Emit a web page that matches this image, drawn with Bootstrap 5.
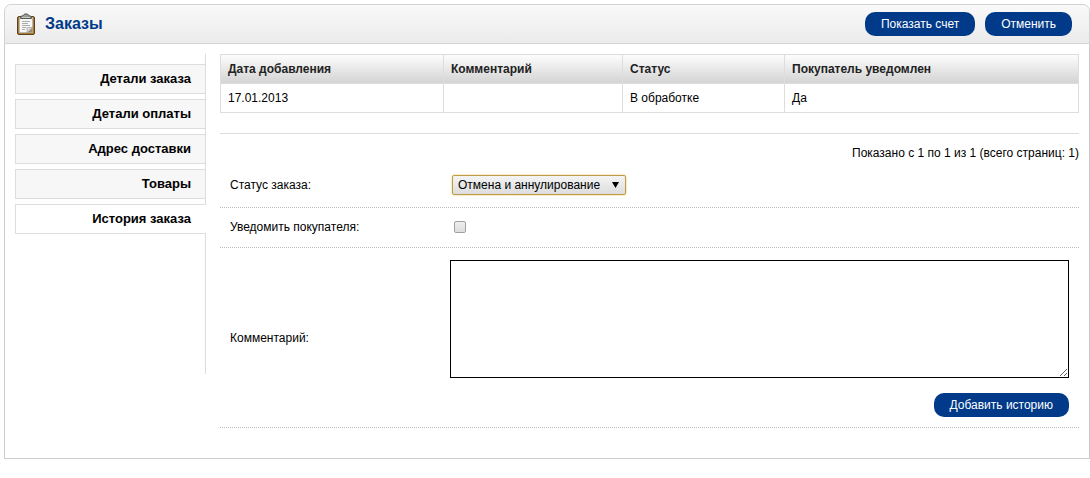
<!DOCTYPE html>
<html lang="ru">
<head>
<meta charset="utf-8">
<meta name="viewport" content="width=device-width, initial-scale=1">
<title>Заказы</title>
<link href="https://cdn.jsdelivr.net/npm/bootstrap@5.3.0/dist/css/bootstrap.min.css" rel="stylesheet">
<style>
body { font-family: "Liberation Sans", Arial, sans-serif; font-size: 12px; line-height: 16px; color: #000; background: #fff; }
.order-box { margin: 4px 0 0 4px; }
.order-head { height: 40px; padding: 0 17px 0 11px; border: 1px solid #d3d3d3; border-radius: 7px 7px 0 0; background: linear-gradient(#f9f9f9, #ebebeb); }
.order-head h1 { margin: 0 0 0 9px; font-size: 16px; line-height: 20px; font-weight: bold; color: #003a88; }
.head-actions { gap: 10px; }
.order-body { padding: 10px 10px 30px; border: 1px solid #ccc; border-top: 0; }
.btn-order { --bs-btn-font-size: 12px; --bs-btn-line-height: 14px; --bs-btn-padding-x: 16px; --bs-btn-padding-y: 5px; --bs-btn-border-width: 0; --bs-btn-border-radius: 10px; --bs-btn-color: #fff; --bs-btn-bg: #003a88; --bs-btn-hover-color: #fff; --bs-btn-hover-bg: #002f70; --bs-btn-active-bg: #002f70; --bs-btn-active-color: #fff; }
.side-tabs { width: 191px; height: 320px; padding-top: 10px; gap: 5px; border-right: 1px solid #ddd; }
.side-tabs .nav-link { height: 30px; padding: 6px 14px 6px 8px; font-size: 13px; line-height: 16px; font-weight: bold; text-align: right; color: #000; background: #f7f7f7; border: 1px solid #ddd; border-right: 0; border-radius: 0; }
.side-tabs .nav-link.active { margin-right: -1px; padding-right: 15px; background: #fff; }
.order-main { margin-left: 14px; min-width: 0; }
.history { table-layout: fixed; border-collapse: collapse; border: 1px solid #ddd; }
.history th, .history td { height: 29px; padding: 6px 7px; border: 1px solid #ddd; }
.history thead tr { background: linear-gradient(#fdfdfd, #d2d2d2); }
.history th { color: #222; }
.history .c-date { width: 223px; } .history .c-note { width: 179px; } .history .c-status { width: 162px; }
.pager { margin-top: 20px; padding-top: 11px; border-top: 1px solid #ddd; text-align: right; }
.form-line { padding: 10px; border-bottom: 1px dotted #bbb; }
.form-line > label { width: 220px; flex: none; }
.row-status { height: 47px; padding-top: 12px; }
.row-notify { height: 40px; padding-bottom: 12px; }
.status-select { appearance: none; width: 174px; height: 20px; margin-left: 2px; padding: 0 5px; font-size: 12px; line-height: 16px; color: #000; border: 1px solid #bd9c48; border-radius: 2px; background: url("data:image/svg+xml,%3Csvg xmlns='http://www.w3.org/2000/svg' width='7' height='6'%3E%3Cpath d='M0 0h7L3.500 6z'/%3E%3C/svg%3E") no-repeat right 6px center, linear-gradient(#f4f4f4, #ddd); box-shadow: 0 0 2px #e8b840; outline: 0; }
.notify-check { appearance: none; width: 12px; height: 12px; margin: 0 0 0 4px; border: 1px solid #a0a0a0; border-radius: 2px; background: linear-gradient(#eee, #ddd); }
.notify-check:checked { background: #003a88; }
.note-cell { padding-top: 2px; }
.note-area { display: block; width: 100%; height: 118px; margin-bottom: 15px; padding: 2px; border: 1px solid #000; border-radius: 0; resize: both; }
</style>
<script src="https://cdn.jsdelivr.net/npm/bootstrap@5.3.0/dist/js/bootstrap.bundle.min.js"></script>
</head>
<body>
<div class="order-box">
  <header class="order-head d-flex align-items-center">
    <svg width="20" height="23" viewBox="0 0 20 23" aria-hidden="true">
      <rect x="1.500" y="3.500" width="17" height="18" rx="1.500" fill="#aa7b2e" stroke="#5d431c"/>
      <path d="M3.500 4.500h13v15h-13z" fill="#f7f7f7" stroke="#b9b9b9"/>
      <path d="M16.500 14.500v5h-5.500z" fill="#9d8d70"/>
      <path d="M11 19.500v-5h5.500z" fill="#ddd" stroke="#999" stroke-width=".6"/>
      <path d="M6 8.500h8M6 10.500h6M6 12.500h8M6 14.500h4M6 16.500h3" stroke="#aaa"/>
      <path d="M4.500 5.500V3.500l3-1 1-1.500h3l1 1.500 3 1v2z" fill="#9a9d93" stroke="#55584f"/>
      <path d="M6 4.500h8" stroke="#c9ccc3"/>
    </svg>
    <h1>Заказы</h1>
    <div class="head-actions d-flex ms-auto">
      <button type="button" class="btn btn-order">Показать счет</button>
      <button type="button" class="btn btn-order">Отменить</button>
    </div>
  </header>
  <div class="order-body d-flex align-items-start">
    <nav class="side-tabs nav flex-column flex-nowrap flex-shrink-0">
      <a class="nav-link" href="#details">Детали заказа</a>
      <a class="nav-link" href="#payment">Детали оплаты</a>
      <a class="nav-link" href="#shipping">Адрес доставки</a>
      <a class="nav-link" href="#products">Товары</a>
      <a class="nav-link active" href="#history" aria-current="page">История заказа</a>
    </nav>
    <main class="order-main flex-grow-1" id="history">
      <table class="history w-100">
        <thead><tr>
          <th class="c-date" scope="col">Дата добавления</th>
          <th class="c-note" scope="col">Комментарий</th>
          <th class="c-status" scope="col">Статус</th>
          <th scope="col">Покупатель уведомлен</th>
        </tr></thead>
        <tbody><tr><td>17.01.2013</td><td></td><td>В обработке</td><td>Да</td></tr></tbody>
      </table>
      <div class="pager">Показано с 1 по 1 из 1 (всего страниц: 1)</div>
      <form>
        <div class="form-line row-status d-flex align-items-center">
          <label for="status">Статус заказа:</label>
          <select id="status" class="status-select"><option>Отмена и аннулирование</option></select>
        </div>
        <div class="form-line row-notify d-flex align-items-center">
          <label for="notify">Уведомить покупателя:</label>
          <input type="checkbox" id="notify" class="notify-check">
        </div>
        <div class="form-line d-flex align-items-center">
          <label for="note">Комментарий:</label>
          <div class="note-cell flex-grow-1 text-end">
            <textarea id="note" class="note-area"></textarea>
            <button type="button" class="btn btn-order">Добавить историю</button>
          </div>
        </div>
      </form>
    </main>
  </div>
</div>
</body>
</html>
